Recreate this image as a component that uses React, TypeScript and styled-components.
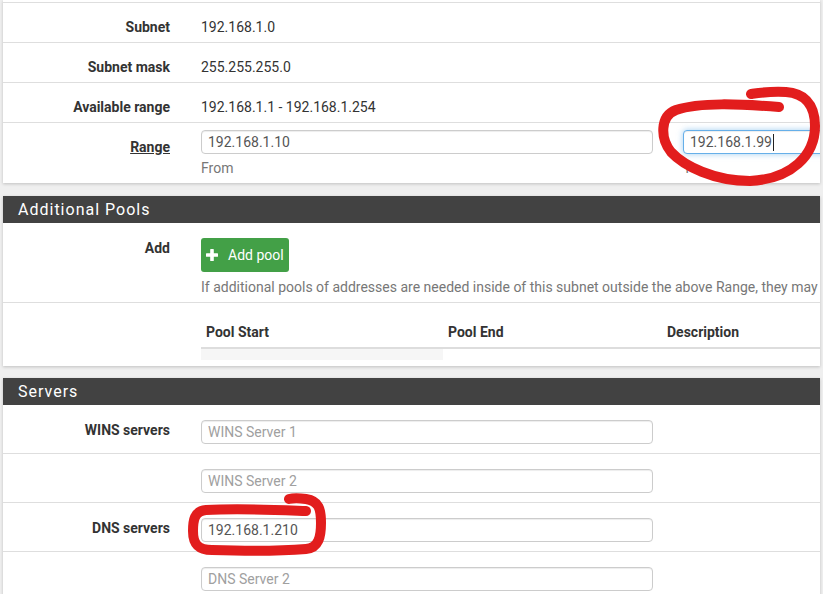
import React from 'react'
import styled, { createGlobalStyle } from 'styled-components'

const GlobalStyle = createGlobalStyle`
  * { box-sizing: border-box; }
  html, body {
    margin: 0;
    padding: 0;
    overflow: hidden;
  }
  body {
    background: #efefef;
    font-family: Roboto, 'Liberation Sans', sans-serif;
    font-size: 14px;
    line-height: 20px;
    color: #333;
  }
`

const PlusIcon = () => (
  <svg width="12" height="12" viewBox="0 0 12 12" aria-hidden="true">
    <path
      d="M4.2 0.6 Q4.2 0 4.8 0 H7.2 Q7.8 0 7.8 0.6 V4.2 H11.4 Q12 4.2 12 4.8 V7.2 Q12 7.8 11.4 7.8 H7.8 V11.4 Q7.8 12 7.2 12 H4.8 Q4.2 12 4.2 11.4 V7.8 H0.6 Q0 7.8 0 7.2 V4.8 Q0 4.2 0.6 4.2 H4.2 Z"
      fill="#fff"
    />
  </svg>
)

const App = () => {
  return (
    <>
      <GlobalStyle />
      <Page>
        <Panel $mb={13}>
          <Body>
            <TopCut />
            <Row $pt={7} $pb={5}>
              <Label $pt={7}>Subnet</Label>
              <Cell $span={2}>
                <StaticText>192.168.1.0</StaticText>
              </Cell>
            </Row>
            <Row $pt={7} $pb={5}>
              <Label $pt={7}>Subnet mask</Label>
              <Cell $span={2}>
                <StaticText>255.255.255.0</StaticText>
              </Cell>
            </Row>
            <Row $pt={7} $pb={5}>
              <Label $pt={7}>Available range</Label>
              <Cell $span={2}>
                <StaticText>192.168.1.1 - 192.168.1.254</StaticText>
              </Cell>
            </Row>
            <Row $pt={7} $pb={5}>
              <Label $pt={7}>
                <Underlined>Range</Underlined>
              </Label>
              <Cell>
                <TextInput readOnly defaultValue="192.168.1.10" />
                <Help $mt={4}>From</Help>
              </Cell>
              <Cell>
                <FocusedField>
                  192.168.1.99
                  <Caret />
                </FocusedField>
                <Help $mt={4}>To</Help>
              </Cell>
            </Row>
          </Body>
        </Panel>

        <Panel $mb={12}>
          <Heading>Additional Pools</Heading>
          <Body>
            <Row $pt={15} $pb={5}>
              <Label>Add</Label>
              <Cell $span={2}>
                <AddButton type="button">
                  <PlusIcon />
                  Add pool
                </AddButton>
                <Help $mt={5}>
                  If additional pools of addresses are needed inside of this
                  subnet outside the above Range, they may be specified here.
                </Help>
              </Cell>
            </Row>
            <Row $pt={11} $pb={6}>
              <Label />
              <Cell $span={2}>
                <PoolTable>
                  <thead>
                    <tr>
                      <Th $w={242}>Pool Start</Th>
                      <Th $w={219}>Pool End</Th>
                      <Th $w={239}>Description</Th>
                    </tr>
                  </thead>
                  <tbody>
                    <tr>
                      <EmptyCell $shade />
                      <EmptyCell />
                      <EmptyCell />
                    </tr>
                  </tbody>
                </PoolTable>
              </Cell>
            </Row>
          </Body>
        </Panel>

        <Panel $mb={0}>
          <Heading>Servers</Heading>
          <Body>
            <Row $pt={15} $pb={9}>
              <Label>WINS servers</Label>
              <Cell>
                <TextInput readOnly placeholder="WINS Server 1" />
              </Cell>
            </Row>
            <Row $pt={15} $pb={9}>
              <Label />
              <Cell>
                <TextInput readOnly placeholder="WINS Server 2" />
              </Cell>
            </Row>
            <Row $pt={15} $pb={9}>
              <Label>DNS servers</Label>
              <Cell>
                <TextInput readOnly defaultValue="192.168.1.210" />
              </Cell>
            </Row>
            <Row $pt={15} $pb={9}>
              <Label />
              <Cell>
                <TextInput readOnly placeholder="DNS Server 2" />
              </Cell>
            </Row>
          </Body>
        </Panel>

        {/* hand-drawn marks laid over the screenshot */}
        <Marks viewBox="0 0 823 594" width="823" height="594">
          <path d="M779,107 C740,104 700,102 676,110 C660,116 660,138 671,152 C684,166 714,181 750,181 C792,179 815,155 815,126 C815,102 802,93 786,92 C770,91 758,93 751,94" />
          <path d="M306,511 C280,510 240,508 206,510 C194,511 193,521 193,531 C193,543 197,550 212,550 C242,551 282,551 306,549 C319,548 321,536 321,523 C321,509 319,501 306,499 C299,498 293,498 289,499" />
        </Marks>
      </Page>
    </>
  )
}

export default App

const Page = styled.div`
  position: relative;
  width: 823px;
  height: 594px;
  overflow: hidden;
  padding: 0 3px;
`

const Panel = styled.section<{ $mb: number }>`
  background: #fff;
  box-shadow: 0 1px 3px rgba(0, 0, 0, 0.2);
  overflow: hidden;
  margin-bottom: ${({ $mb }) => $mb}px;
`

const Heading = styled.h2`
  margin: 0;
  height: 27px;
  padding: 0 15px;
  background: #424242;
  color: #fff;
  font-size: 16px;
  font-weight: 400;
  line-height: 27px;
  letter-spacing: 1px;
`

const Body = styled.div``

const TopCut = styled.div`
  height: 2px;
`

const Row = styled.div<{ $pt: number; $pb: number }>`
  display: grid;
  grid-template-columns: 183px 482px 482px;
  padding: ${({ $pt, $pb }) => `${$pt}px 0 ${$pb}px`};
  border-top: 1px solid #dedede;

  &:first-child {
    border-top: 0;
  }
`

const Label = styled.div<{ $pt?: number }>`
  padding: ${({ $pt }) => $pt ?? 0}px 16px 0 0;
  text-align: right;
  font-weight: 700;
  color: #333;
`

const Underlined = styled.span`
  text-decoration: underline;
`

const Cell = styled.div<{ $span?: number }>`
  grid-column: span ${({ $span }) => $span ?? 1};
  padding: 0 15px;
  min-width: 0;
`

const StaticText = styled.div`
  padding-top: 7px;
  color: #333;
`

const TextInput = styled.input`
  display: block;
  width: 100%;
  height: 24px;
  padding: 0 6px;
  border: 1px solid #ccc;
  border-radius: 4px;
  box-shadow: inset 0 1px 1px rgba(0, 0, 0, 0.075);
  background: #fff;
  font-family: Roboto, 'Liberation Sans', sans-serif;
  font-size: 14px;
  line-height: 22px;
  color: #555;
  outline: none;

  &::placeholder {
    color: #a0a0a0;
  }
`

const FocusedField = styled.div`
  display: flex;
  align-items: center;
  width: 100%;
  height: 24px;
  padding: 0 6px;
  border: 1px solid #66afe9;
  border-radius: 4px;
  box-shadow: inset 0 1px 1px rgba(0, 0, 0, 0.075),
    0 0 6px rgba(102, 175, 233, 0.6);
  background: #fff;
  line-height: 22px;
  color: #555;
`

const Caret = styled.span`
  display: inline-block;
  width: 1px;
  height: 17px;
  margin-left: 1px;
  background: #222;
`

const Help = styled.div<{ $mt: number }>`
  margin-top: ${({ $mt }) => $mt}px;
  color: #777;
  white-space: nowrap;
`

const AddButton = styled.button`
  display: inline-flex;
  align-items: center;
  gap: 10px;
  height: 34px;
  padding: 0 5px 0 5px;
  border: 0;
  border-radius: 3px;
  background: #43a047;
  color: #fff;
  font-family: Roboto, 'Liberation Sans', sans-serif;
  font-size: 14px;
  line-height: 20px;
  cursor: pointer;
`

const PoolTable = styled.table`
  width: 700px;
  table-layout: fixed;
  border-collapse: collapse;
`

const Th = styled.th<{ $w: number }>`
  width: ${({ $w }) => $w}px;
  padding: 8px 5px 5px;
  border-bottom: 2px solid #ddd;
  text-align: left;
  font-weight: 700;
  line-height: 20px;
  color: #333;
`

const EmptyCell = styled.td<{ $shade?: boolean }>`
  height: 12px;
  padding: 0;
  background: ${({ $shade }) => ($shade ? '#f6f6f6' : 'transparent')};
`

const Marks = styled.svg`
  position: absolute;
  top: 0;
  left: 0;
  pointer-events: none;

  path {
    fill: none;
    stroke: #e21d1d;
    stroke-width: 10;
    stroke-linecap: round;
    stroke-linejoin: round;
  }
`
